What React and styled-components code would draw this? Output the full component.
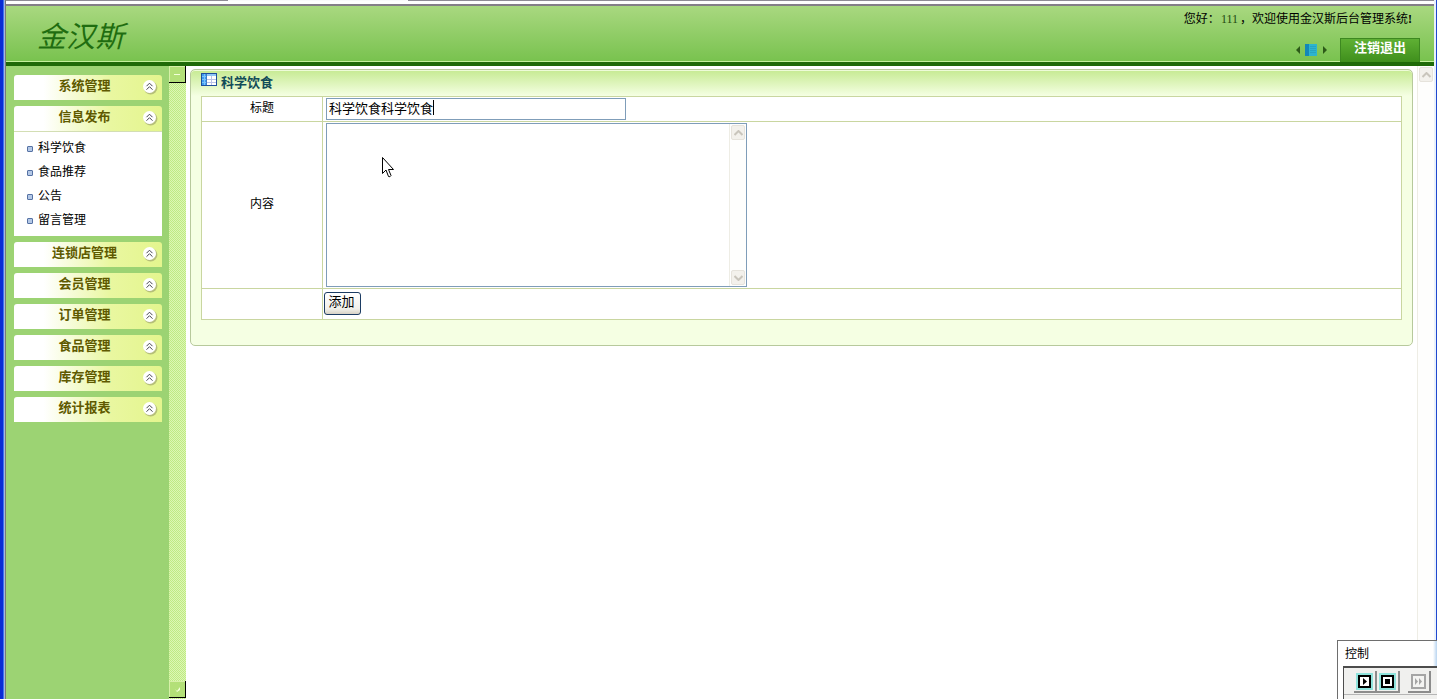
import React from "react";
import { useState } from "react";
//style
import styled, { createGlobalStyle } from "styled-components";

const menus = [
  { title: "系统管理" },
  { title: "信息发布", items: ["科学饮食", "食品推荐", "公告", "留言管理"] },
  { title: "连锁店管理" },
  { title: "会员管理" },
  { title: "订单管理" },
  { title: "食品管理" },
  { title: "库存管理" },
  { title: "统计报表" },
];

const CollapseIcon = () => (
  <svg width="16" height="16" viewBox="0 0 16 16" aria-hidden="true">
    <circle cx="8.6" cy="8.8" r="6.8" fill="#a5ac72" opacity="0.75" />
    <circle cx="7.5" cy="7.5" r="6.5" fill="#fff" />
    <path
      d="M4.5 7.2L7.5 4.2L10.5 7.2M4.5 10.7L7.5 7.7L10.5 10.7"
      fill="none"
      stroke="#44444f"
      strokeWidth="1"
    />
  </svg>
);

const TableIcon = () => (
  <svg width="16" height="13" viewBox="0 0 16 13" aria-hidden="true">
    <rect width="16" height="13" fill="#1f4f9c" />
    <rect x="1" y="1" width="14" height="11" fill="#fff" />
    <rect x="1" y="1" width="4" height="11" fill="#3d9cf0" />
    <rect x="5" y="1" width="10" height="2" fill="#8fc6f6" />
    <path
      d="M1 3.5H5M1 6.5H5M1 9.5H5M3.5 1V12"
      stroke="#7cc2fb"
      strokeWidth="1"
    />
    <path d="M6 6.5H15M6 9.5H15M10.5 3V12" stroke="#b9c2e8" strokeWidth="1" />
    <path d="M5.5 1V12" stroke="#3f7cc4" strokeWidth="1" />
  </svg>
);

const SwitchIcon = () => (
  <svg width="32" height="12" viewBox="0 0 32 12" aria-hidden="true">
    <path d="M4 2V10L0 6Z" fill="#2c5a18" />
    <rect x="9" width="4" height="12" fill="#1387b8" />
    <rect x="13" width="8" height="12" fill="#2cb4cf" />
    <path
      d="M14 2.5H20M14 4.5H20M14 6.5H20M14 8.5H20"
      stroke="#27a3c2"
      strokeWidth="1"
    />
    <path d="M27 2V10L31 6Z" fill="#2c5a18" />
  </svg>
);

const Chevron = ({ down }) => (
  <svg width="9" height="6" viewBox="0 0 9 6" aria-hidden="true">
    <path
      d={down ? "M0.5 1L4.5 5L8.5 1" : "M0.5 5L4.5 1L8.5 5"}
      fill="none"
      stroke="#c9c5bc"
      strokeWidth="2"
    />
  </svg>
);

const ScrollTrack = () => (
  <Track>
    <TrackButton type="button" aria-label="向上" tabIndex={-1}>
      <Chevron />
    </TrackButton>
    <TrackButton type="button" aria-label="向下" tabIndex={-1}>
      <Chevron down />
    </TrackButton>
  </Track>
);

const Header = () => (
  <StyledHeader>
    <Logo>金汉斯</Logo>
    <HeaderRight>
      <Welcome>
        您好：<span>111</span>，欢迎使用金汉斯后台管理系统<b>!</b>
      </Welcome>
      <HeaderTools>
        <SwitchButton type="button" aria-label="切换菜单">
          <SwitchIcon />
        </SwitchButton>
        <Logout type="button">注销退出</Logout>
      </HeaderTools>
    </HeaderRight>
  </StyledHeader>
);

const Sidebar = () => (
  <StyledSidebar>
    <MenuList>
      {menus.map((menu) => (
        <div key={menu.title}>
          <MenuTitle type="button">
            <span>{menu.title}</span>
            <CollapseIcon />
          </MenuTitle>
          {menu.items && (
            <SubMenu>
              {menu.items.map((item) => (
                <li key={item}>
                  <a href="#menu">{item}</a>
                </li>
              ))}
            </SubMenu>
          )}
        </div>
      ))}
    </MenuList>
    <SideTrack>
      <SideButton type="button" aria-label="向上">
        <svg width="8" height="4" viewBox="0 0 8 4" aria-hidden="true">
          <path d="M1 2.5H7" stroke="#f2ffd8" />
        </svg>
      </SideButton>
      <SideButton type="button" aria-label="向下">
        <svg width="8" height="8" viewBox="0 0 8 8" aria-hidden="true">
          <path d="M2 4L4 6L7 2V5L4 7" fill="#f2ffd8" />
        </svg>
      </SideButton>
    </SideTrack>
  </StyledSidebar>
);

const ArticleForm = () => {
  //state
  const [title, setTitle] = useState("科学饮食科学饮食");
  const [content, setContent] = useState("");

  //event handlers
  const handleSubmit = (e) => {
    e.preventDefault();
  };

  return (
    <Panel onSubmit={handleSubmit}>
      <PanelTitle>
        <TableIcon />
        <span>科学饮食</span>
      </PanelTitle>
      <FormTable>
        <tbody>
          <FormRow>
            <th scope="row">
              <label htmlFor="title">标题</label>
            </th>
            <td>
              <Field>
                <TitleInput
                  id="title"
                  type="text"
                  value={title}
                  onChange={(e) => setTitle(e.target.value)}
                />
                <Caret />
              </Field>
            </td>
          </FormRow>
          <FormRow>
            <th scope="row">
              <label htmlFor="content">内容</label>
            </th>
            <td>
              <TextBox>
                <textarea
                  id="content"
                  value={content}
                  onChange={(e) => setContent(e.target.value)}
                />
                <ScrollTrack />
                <Pointer width="12" height="21" viewBox="0 0 12 21">
                  <path
                    d="M0.5 0.5V16.5L4 13L6.5 19.5Q8 20.5 9 18.5L6.5 12.5H11.5Z"
                    fill="#fff"
                    stroke="#000"
                  />
                </Pointer>
              </TextBox>
            </td>
          </FormRow>
          <FormRow $tight>
            <th />
            <td>
              <AddButton type="submit">添加</AddButton>
            </td>
          </FormRow>
        </tbody>
      </FormTable>
    </Panel>
  );
};

const ControlWindow = () => (
  <StyledControl>
    <ControlTitle>控制</ControlTitle>
    <ControlBar>
      <ControlButton type="button" aria-label="播放">
        <svg width="13" height="13" viewBox="0 0 13 13">
          <rect x="1" y="1" width="11" height="11" fill="#fff" stroke="#000" strokeWidth="2" />
          <path d="M5 3V10L9 6.5Z" />
        </svg>
      </ControlButton>
      <ControlButton type="button" aria-label="停止">
        <svg width="13" height="13" viewBox="0 0 13 13">
          <rect x="1" y="1" width="11" height="11" fill="#fff" stroke="#000" strokeWidth="2" />
          <rect x="4" y="4" width="5" height="5" />
        </svg>
      </ControlButton>
      <ControlButton type="button" aria-label="快进" $off>
        <svg width="15" height="15" viewBox="0 0 15 15">
          <rect x="1" y="1" width="13" height="13" fill="#f4f4f2" stroke="#a5a5a5" strokeWidth="2" />
          <path d="M4 4L7 7.5L4 11ZM8 4L11 7.5L8 11Z" fill="#a5a5a5" />
        </svg>
      </ControlButton>
    </ControlBar>
  </StyledControl>
);

const App = () => {
  return (
    <>
      <GlobalStyle />
      <Frame>
        <TopEdge>
          <span />
        </TopEdge>
        <Header />
        <Body>
          <Sidebar />
          <Main>
            <ArticleForm />
          </Main>
          <ScrollTrack />
        </Body>
      </Frame>
      <ControlWindow />
    </>
  );
};

const GlobalStyle = createGlobalStyle`
  * {
    box-sizing: border-box;
  }
  body {
    margin: 0;
    background: #fff;
    color: #000;
    font-family: "Liberation Serif", "Noto Sans CJK SC", serif;
    font-size: 12px;
    line-height: 16px;
  }
  button, input, textarea {
    font-family: inherit;
    margin: 0;
  }
  svg {
    display: block;
    flex: none;
  }
`;

const Frame = styled.div`
  display: flex;
  flex-direction: column;
  height: 100vh;
  padding: 0 3px 0 6px;
  background: linear-gradient(
      to right,
      #0a2bd4 0 3px,
      #3f74ee 3px 4px,
      #a9b6dc 4px 5px,
      #77787c 5px 6px,
      transparent 6px
    ),
    linear-gradient(to left, #1f49cf 0 1px, #e9f1fb 1px 3px, #fff 3px);
`;

const TopEdge = styled.div`
  flex: none;
  height: 6px;
  background: #fff;
  border-top: 1px solid #8f8c96;
  border-bottom: 2px solid #847f88;
  span {
    display: block;
    width: 180px;
    height: 1px;
    margin: -1px 0 0 222px;
    background: #fafafc;
  }
`;

const StyledHeader = styled.header`
  display: flex;
  flex: none;
  justify-content: space-between;
  height: 60px;
  background: linear-gradient(#a9d880, #78c24e);
  border-bottom: 4px solid #1f6a08;
  box-shadow: inset 0 -1px 0 #c4f09c;
`;

const Logo = styled.h1`
  margin: 9px 0 0 31px;
  color: #1f6d10;
  font-size: 29px;
  font-style: italic;
  font-weight: 400;
  line-height: 44px;
`;

const HeaderRight = styled.div`
  display: flex;
  flex-direction: column;
  justify-content: space-between;
  align-items: flex-end;
`;

const Welcome = styled.p`
  margin: 5px 22px 0 0;
  span {
    padding: 0 2px 0 1px;
    color: #1f4a10;
  }
`;

const HeaderTools = styled.div`
  display: flex;
  align-items: center;
  gap: 12px;
  margin-right: 14px;
`;

const SwitchButton = styled.button`
  padding: 0;
  border: 0;
  background: none;
`;

const Logout = styled.button`
  width: 80px;
  height: 24px;
  padding: 0 0 5px;
  border: 1px solid #3d8820;
  border-bottom: 0;
  background: linear-gradient(#5fb034, #3f8f1c);
  color: #fff;
  font-size: 13px;
  font-weight: 700;
  line-height: 16px;
`;

const Body = styled.div`
  display: flex;
  flex: 1;
  min-height: 0;
`;

const StyledSidebar = styled.aside`
  display: flex;
  flex: none;
  width: 180px;
  background: #9cd373;
`;

const MenuList = styled.nav`
  display: flex;
  flex: 1;
  flex-direction: column;
  gap: 6px;
  padding: 9px 7px 0 8px;
`;

const MenuTitle = styled.button`
  display: flex;
  align-items: center;
  width: 100%;
  height: 25px;
  padding: 0 4px 1px 21px;
  border: 0;
  border-radius: 3px 3px 0 0;
  background: linear-gradient(to right, #fff 20%, #e9f7a0 65%, #e4f58e);
  color: #5f5a00;
  font-size: 13px;
  font-weight: 700;
  line-height: 16px;
  span {
    flex: 1;
    padding: 0 8px 2px 0;
    text-align: center;
  }
`;

const SubMenu = styled.ul`
  margin: 0;
  padding: 4px 0 4px 13px;
  border-top: 1px solid #d3deb4;
  background: #fff;
  list-style: none;
  li {
    display: flex;
    align-items: center;
    gap: 5px;
    height: 24px;
  }
  li::before {
    content: "";
    width: 6px;
    height: 6px;
    margin-top: 2px;
    border: 1px solid #5672a4;
    border-radius: 1px;
    background: #b4c8e6;
    box-sizing: border-box;
  }
  a {
    color: #000;
    text-decoration: none;
  }
`;

const SideTrack = styled.div`
  display: flex;
  flex-direction: column;
  justify-content: space-between;
  width: 17px;
  padding-bottom: 1px;
  background: repeating-conic-gradient(#bfea83 0 25%, #dcf7b5 0 50%) 0 0 / 2px
    2px;
`;

const SideButton = styled.button`
  display: flex;
  align-items: center;
  justify-content: center;
  height: 17px;
  padding: 0;
  border: 1px solid #000;
  border-width: 0 1px 1px 0;
  background: #b3e078;
  box-shadow: inset 1px 1px 0 #d7f0a8;
`;

const Main = styled.main`
  flex: 1;
  min-width: 0;
  padding: 3px 4px 0;
`;

const Panel = styled.form`
  padding: 0 10px 25px;
  border: 1px solid #b7c99c;
  border-radius: 5px;
  background: linear-gradient(#c6ea92, #f5ffe3 26px);
  box-shadow: inset 0 1px 0 #eefbd8;
`;

const PanelTitle = styled.h2`
  display: flex;
  gap: 4px;
  height: 26px;
  margin: 0;
  padding-top: 3px;
  color: #124c58;
  font-size: 13px;
  font-weight: 700;
  line-height: 20px;
`;

const FormTable = styled.table`
  width: 100%;
  border-collapse: collapse;
  background: #fff;
  th,
  td {
    border: 1px solid #c9d6a0;
  }
  th {
    width: 121px;
    padding: 0 0 3px;
    font-weight: 400;
  }
`;

const FormRow = styled.tr`
  td {
    padding: ${(props) => (props.$tight ? "3px 1px 4px" : "1px 3px")};
  }
`;

const Field = styled.div`
  position: relative;
  width: 300px;
`;

const TitleInput = styled.input`
  display: block;
  width: 100%;
  height: 22px;
  padding: 0 2px 4px;
  border: 1px solid #7f9db9;
  outline: 0;
  background: #fff;
  font-size: 13px;
`;

const Caret = styled.i`
  position: absolute;
  top: 2px;
  left: 107px;
  width: 1px;
  height: 15px;
  background: #000;
`;

const TextBox = styled.div`
  position: relative;
  display: flex;
  width: 421px;
  height: 164px;
  border: 1px solid #7f9db9;
  textarea {
    flex: 1;
    padding: 2px;
    border: 0;
    outline: 0;
    resize: none;
    font-size: 13px;
  }
`;

const Pointer = styled.svg`
  position: absolute;
  top: 33px;
  left: 55px;
  pointer-events: none;
`;

const Track = styled.div`
  display: flex;
  flex: none;
  flex-direction: column;
  justify-content: space-between;
  width: 17px;
  padding: 1px;
  border-left: 1px solid #eeede5;
  background: #fefefd;
`;

const TrackButton = styled.button`
  display: flex;
  align-items: center;
  justify-content: center;
  height: 15px;
  padding: 0;
  border: 1px solid #e6e3dc;
  border-radius: 2px;
  background: #f3f1ec;
`;

const AddButton = styled.button`
  display: block;
  width: 37px;
  height: 23px;
  padding: 0 2px 4px 0;
  border: 1px solid #1c3c63;
  border-radius: 3px;
  background: linear-gradient(#fff, #f1f0ea 75%, #d8d2c6);
  color: #000;
  font-size: 13px;
  line-height: 16px;
`;

const StyledControl = styled.section`
  position: fixed;
  right: 0;
  bottom: 0;
  width: 100px;
  height: 59px;
  padding-left: 5px;
  border: 1px solid #6e6e6e;
  border-width: 1px 0 0 1px;
  background: linear-gradient(to left, #b8d4f0, #fff 4px);
`;

const ControlTitle = styled.h2`
  margin: 0;
  padding: 5px 0 4px 2px;
  font-size: 12px;
  font-weight: 400;
`;

const ControlBar = styled.div`
  display: flex;
  height: 33px;
  padding: 3px 0 0 10px;
  border: 1px solid #4c4c4c;
  border-width: 2px 0 0 1px;
  background: linear-gradient(#f0f0ee 26px, #b5b5b5 26px 27px, #f0f0ee 27px);
`;

const ControlButton = styled.button`
  display: flex;
  align-items: center;
  justify-content: center;
  width: 23px;
  height: 22px;
  padding: 0;
  border: 1px solid #8c8c8c;
  border-width: 0 2px 2px 0;
  margin-left: ${(props) => (props.$off ? "8px" : "0")};
  background: #f0f0ee;
  svg {
    outline: ${(props) => (props.$off ? "0" : "2px solid #8fe3dc")};
  }
`;

export default App;
